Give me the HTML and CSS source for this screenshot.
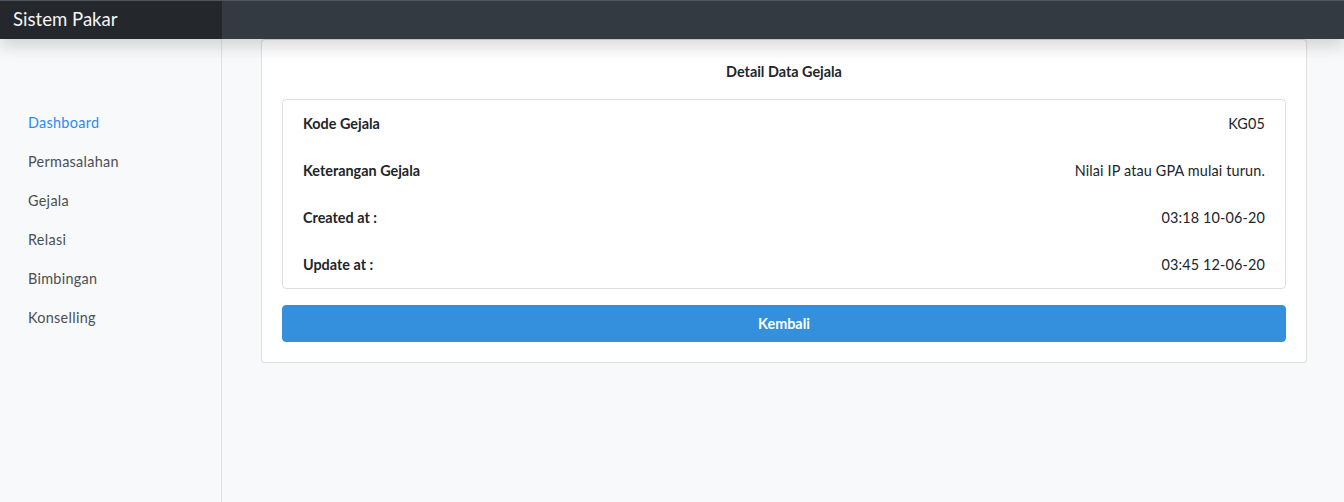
FILE: index.html
```html
<!DOCTYPE html>
<html lang="id">
<head>
<meta charset="utf-8">
<title>Sistem Pakar</title>
<link rel="stylesheet" href="styles.css">
</head>
<body>
<header class="navbar">
  <div class="brand">Sistem Pakar</div>
  <div class="navbar-rest"></div>
</header>
<div class="layout">
  <aside class="sidebar">
    <nav class="side-nav">
      <a class="nav-link active" href="#">Dashboard</a>
      <a class="nav-link" href="#">Permasalahan</a>
      <a class="nav-link" href="#">Gejala</a>
      <a class="nav-link" href="#">Relasi</a>
      <a class="nav-link" href="#">Bimbingan</a>
      <a class="nav-link" href="#">Konselling</a>
    </nav>
  </aside>
  <main class="content">
    <div class="card">
      <div class="card-body">
        <h5 class="card-title">Detail Data Gejala</h5>
        <div class="detail-list">
          <div class="detail-row"><span class="label">Kode Gejala</span><span class="value">KG05</span></div>
          <div class="detail-row"><span class="label">Keterangan Gejala</span><span class="value">Nilai IP atau GPA mulai turun.</span></div>
          <div class="detail-row"><span class="label">Created at :</span><span class="value">03:18 10-06-20</span></div>
          <div class="detail-row"><span class="label">Update at :</span><span class="value">03:45 12-06-20</span></div>
        </div>
        <a class="btn-primary" href="#">Kembali</a>
      </div>
    </div>
  </main>
</div>
</body>
</html>
```
FILE: styles.css
```css
* { box-sizing: border-box; }
html, body { margin: 0; height: 100%; }
body {
  font-family: "Lato", "Noto Sans", sans-serif;
  font-size: 14.4px;
  line-height: 1.6;
  color: #212529;
  background: #f8fafc;
  overflow: hidden;
}
.navbar {
  position: relative;
  z-index: 10;
  display: flex;
  height: 39px;
  border-top: 1px solid #50555b;
  box-shadow: 0 8px 16px rgba(0, 0, 0, 0.15);
}
.brand {
  width: 222px;
  background: #24272b;
  color: #f4f5f6;
  font-size: 18.6px;
  line-height: 37px;
  padding-left: 13px;
}
.navbar-rest {
  flex: 1;
  background: #343a42;
}
.layout {
  display: flex;
  height: 463px;
}
.sidebar {
  width: 222px;
  background: #f8f9fa;
  border-right: 1px solid #dee2e6;
  padding: 64px 12px 0;
}
.side-nav { display: flex; flex-direction: column; }
.nav-link {
  display: block;
  padding: 8px 16px;
  color: #4a4f55;
  text-decoration: none;
  letter-spacing: 0.3px;
}
.nav-link.active { color: #2a8bf2; }
.content {
  flex: 1;
  background: #f8f9fa;
  padding: 0 37px 0 39px;
}
.card {
  background: #fff;
  border: 1px solid rgba(0, 0, 0, 0.125);
  border-radius: 4px;
}
.card-body { padding: 20px; }
.card-title {
  margin: 0 0 16px;
  font-size: 14.4px;
  font-weight: 700;
  line-height: 23px;
  text-align: center;
}
.detail-list {
  border: 1px solid rgba(0, 0, 0, 0.125);
  border-radius: 4px;
  margin-bottom: 16px;
}
.detail-row {
  display: flex;
  justify-content: space-between;
  padding: 12px 20px;
  line-height: 23px;
}
.label { font-weight: 700; }
.value { letter-spacing: 0.15px; }
.btn-primary {
  display: block;
  background: #3490dc;
  color: #fff;
  text-align: center;
  text-decoration: none;
  font-weight: 700;
  border: 1px solid #3490dc;
  border-radius: 4px;
  padding: 6px 12px;
  line-height: 23px;
}
```
